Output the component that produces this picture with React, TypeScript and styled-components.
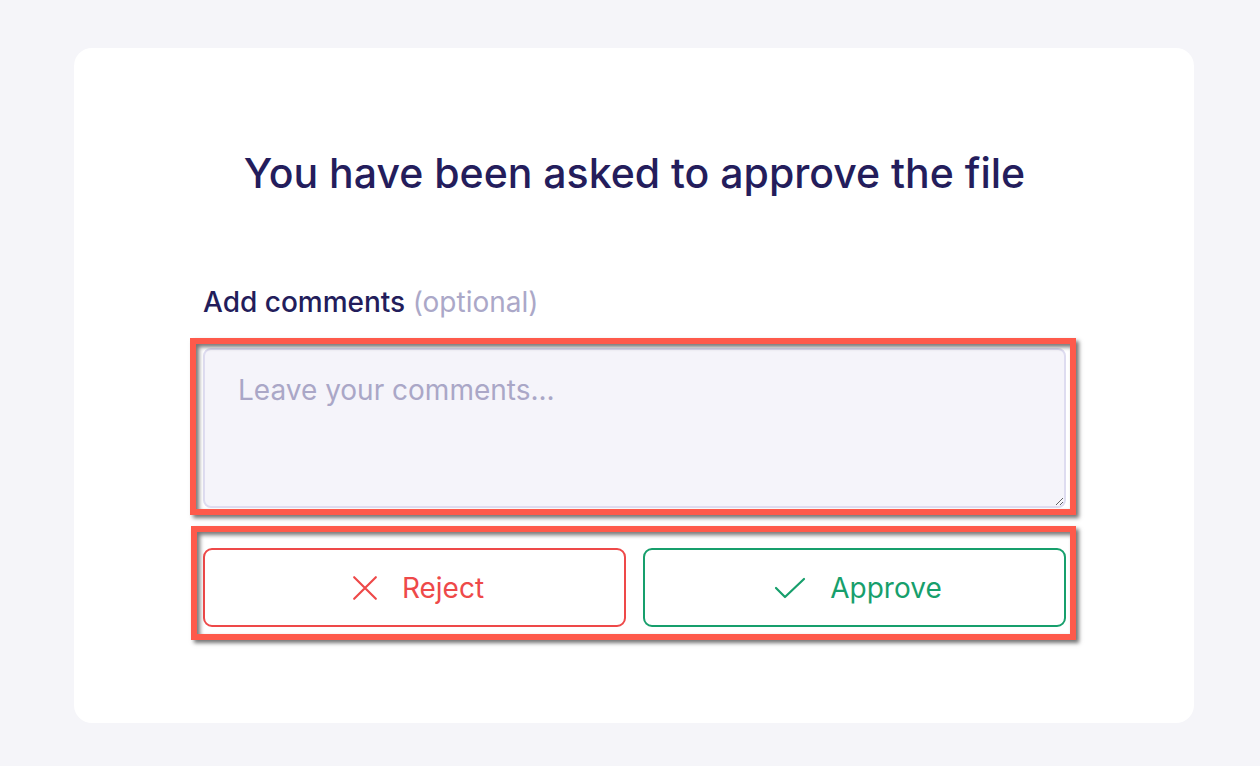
import React from "react";
import styled, { createGlobalStyle } from "styled-components";

const GlobalStyle = createGlobalStyle`
  html, body {
    margin: 0;
    padding: 0;
    background: #f5f5f9;
    font-family: Inter, "Liberation Sans", sans-serif;
  }
  * { box-sizing: border-box; }
`;

const Page = styled.div`
  padding: 48px 66px 43px 74px;
`;

const Card = styled.div`
  background: #ffffff;
  border-radius: 18px;
  height: 675px;
  padding: 98px 128px 0 129px;
  display: flex;
  flex-direction: column;
`;

const Title = styled.h1`
  margin: 0;
  text-align: center;
  font-family: Inter, "Liberation Sans", sans-serif;
  font-weight: 500;
  font-size: 41px;
  line-height: 54px;
  color: #241d5c;
`;

const Label = styled.label`
  margin-top: 85px;
  font-size: 28px;
  line-height: 34px;
  font-weight: 500;
  color: #231d5b;
`;

const Optional = styled.span`
  font-weight: 400;
  color: #aba8c8;
`;

const Marked = styled.div<{ $inset: string }>`
  position: relative;
  &::after {
    content: "";
    position: absolute;
    inset: ${({ $inset }) => $inset};
    border: 6px solid #fe5a4b;
    box-shadow: 3px 3px 4px rgba(0, 0, 0, 0.55),
      inset 3px 3px 4px rgba(0, 0, 0, 0.55);
    pointer-events: none;
  }
`;

const Comments = styled.textarea`
  display: block;
  width: 100%;
  height: 160px;
  margin: 0;
  padding: 23px 33px;
  resize: vertical;
  background: #f5f4fa;
  border: 2px solid #dedcf0;
  border-radius: 8px;
  font-family: Inter, "Liberation Sans", sans-serif;
  font-size: 28px;
  color: #231d5b;
  outline: none;
  &::placeholder {
    color: #aaa7c7;
  }
`;

const Actions = styled.div`
  display: grid;
  grid-template-columns: 1fr 1fr;
  gap: 17px;
`;

const ActionButton = styled.button<{ $tone: string }>`
  height: 79px;
  display: flex;
  align-items: center;
  justify-content: center;
  gap: 24px;
  padding: 0 0 0 7px;
  background: #ffffff;
  border: 2px solid ${({ $tone }) => $tone};
  border-radius: 9px;
  color: ${({ $tone }) => $tone};
  font-family: Inter, "Liberation Sans", sans-serif;
  font-size: 28px;
  cursor: pointer;
`;

const CrossIcon = () => (
  <svg width="26" height="26" viewBox="0 0 24 24" fill="none" stroke="currentColor" strokeWidth="2" strokeLinecap="round">
    <path d="M2 2 L22 22 M22 2 L2 22" />
  </svg>
);

const CheckIcon = () => (
  <svg width="32" height="24" viewBox="0 0 32 24" fill="none" stroke="currentColor" strokeWidth="2.2" strokeLinecap="round" strokeLinejoin="round">
    <path d="M2 12 L11 21 L30 3" />
  </svg>
);

const App = () => (
  <>
    <GlobalStyle />
    <Page>
      <Card>
        <Title>You have been asked to approve the file</Title>
        <Label htmlFor="comments">
          Add comments <Optional>(optional)</Optional>
        </Label>
        <Marked $inset="-10px -10px -7px -13px" style={{ marginTop: 29 }}>
          <Comments id="comments" placeholder="Leave your comments..." />
        </Marked>
        <Marked $inset="-22px -10px -13px -12px" style={{ marginTop: 40 }}>
          <Actions>
            <ActionButton $tone="#ee4949">
              <CrossIcon />
              Reject
            </ActionButton>
            <ActionButton $tone="#179f6c">
              <CheckIcon />
              Approve
            </ActionButton>
          </Actions>
        </Marked>
      </Card>
    </Page>
  </>
);

export default App;
